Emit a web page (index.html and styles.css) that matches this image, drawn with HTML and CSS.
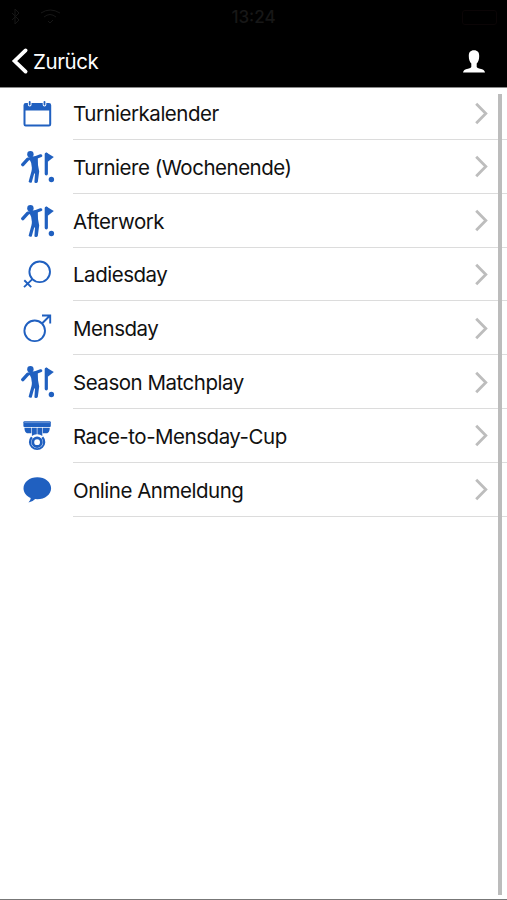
FILE: index.html
```html
<!DOCTYPE html>
<html lang="de">

<head>
    <meta charset="UTF-8">
    <meta name="viewport" content="width=device-width, initial-scale=1.0">
    <title>Turniere</title>
    <link rel="stylesheet" href="styles.css">
</head>

<body>

    <svg class="sprite" width="0" height="0">
        <symbol id="golf" viewBox="0 0 34 32">
            <circle cx="9.4" cy="3.2" r="3.2" />
            <path d="M1.8 13.6 6.8 8.2" fill="none" stroke="currentColor" stroke-width="3.4" stroke-linecap="round" />
            <path d="M8 7.8Q14 7.6 19.8 4.7" fill="none" stroke="currentColor" stroke-width="3" stroke-linecap="round" />
            <path d="M8.2 7.5Q12.5 6.2 16.8 7L17 14 18.2 20.5 16.8 31Q15 33 13.4 31.2L14 22.5 13.2 22.5 10.7 31.4Q9 32.4 7.6 30.7L10.4 20.5Q12 14 8.2 7.5Z" />
            <path d="M25.3 3V22.8" fill="none" stroke="currentColor" stroke-width="3.2" stroke-linecap="round" />
            <path d="M25.3 1.5 32.8 6 26.5 11Z" />
            <circle cx="30.4" cy="28.5" r="2.7" />
        </symbol>
        <symbol id="chevron" viewBox="0 0 14 24">
            <path d="M2.2 1.8 11.8 11.5 2.2 21.2" fill="none" stroke="currentColor" stroke-width="2.8" />
        </symbol>
    </svg>

    <header class="header">
        <div class="status-bar">
            <div class="status-left">
                <svg width="46" height="18" viewBox="0 0 46 18" fill="none" stroke="currentColor">
                    <path d="M2 5 9 12 5 16V1L9 5 2 12" />
                    <path d="M31 5Q40 -1 50 5M34 9Q40 4 46 9M38 13 40 15 43 12" />
                </svg>
            </div>
            <span class="status-time">13:24</span>
            <div class="status-right">
                <div class="battery"></div>
            </div>
        </div>
        <nav class="nav-bar">
            <a class="back" href="#">
                <svg width="17" height="26" viewBox="0 0 17 26">
                    <path d="M14.6 2.4 3.6 13 14.6 23.6" fill="none" stroke="currentColor" stroke-width="3.8" stroke-linecap="round" />
                </svg>
                <span>Zurück</span>
            </a>
            <a class="profile" href="#" aria-label="Profil">
                <svg width="22" height="23" viewBox="0 0 22 23" fill="currentColor">
                    <path d="M11 0.3C14.6 0.3 16.3 2.5 16.2 6 16.2 9.6 15.3 12 13.7 13.4V17Q14 18.2 17 18.8 21.7 19.5 22 22.6H0Q0.3 19.5 5 18.8 8 18.2 8.3 17V13.4C6.7 12 5.8 9.6 5.8 6 5.7 2.5 7.4 0.3 11 0.3Z" />
                </svg>
            </a>
        </nav>
    </header>

    <main class="content">
        <ul class="menu">
            <li class="menu-item">
                <svg class="icon" viewBox="0 0 34 32">
                    <path fill-rule="evenodd" d="M4.7 5H28Q30.2 5 30.2 7.2V26.3Q30.2 28.5 28 28.5H4.7Q2.5 28.5 2.5 26.3V7.2Q2.5 5 4.7 5ZM4.5 12.5V26.5H28.2V12.5Z" />
                    <path d="M8.7 3.5V6.7M23.5 3.5V6.7" stroke="#fff" stroke-width="3.6" stroke-linecap="round" />
                    <path d="M8.7 3.8V6.5M23.5 3.8V6.5" stroke="currentColor" stroke-width="1.8" stroke-linecap="round" />
                </svg>
                <div class="row"><span>Turnierkalender</span><svg class="chevron"><use href="#chevron" /></svg></div>
            </li>
            <li class="menu-item">
                <svg class="icon"><use href="#golf" /></svg>
                <div class="row"><span>Turniere (Wochenende)</span><svg class="chevron"><use href="#chevron" /></svg></div>
            </li>
            <li class="menu-item">
                <svg class="icon"><use href="#golf" /></svg>
                <div class="row"><span>Afterwork</span><svg class="chevron"><use href="#chevron" /></svg></div>
            </li>
            <li class="menu-item">
                <svg class="icon line" viewBox="0 0 34 32">
                    <circle cx="18.7" cy="13.8" r="10.3" />
                    <path d="M11.4 21.1 3 29.1M3.3 22.3 10.2 29.1" />
                </svg>
                <div class="row"><span>Ladiesday</span><svg class="chevron"><use href="#chevron" /></svg></div>
            </li>
            <li class="menu-item">
                <svg class="icon line" viewBox="0 0 34 32">
                    <circle cx="13.7" cy="18.8" r="10.3" />
                    <path d="M21 11.5 29 3.5M21 3.5H29.2V11.6" />
                </svg>
                <div class="row"><span>Mensday</span><svg class="chevron"><use href="#chevron" /></svg></div>
            </li>
            <li class="menu-item">
                <svg class="icon"><use href="#golf" /></svg>
                <div class="row"><span>Season Matchplay</span><svg class="chevron"><use href="#chevron" /></svg></div>
            </li>
            <li class="menu-item">
                <svg class="icon" viewBox="0 0 34 32">
                    <rect x="2.4" y="1.2" width="27.4" height="5.8" rx="1" />
                    <path d="M3.3 2.6H28.9" stroke="#7fa3dc" stroke-width="0.7" />
                    <path d="M3.4 7.7H10.3V13.2H6Q3.6 12.3 3.4 7.7ZM10.9 7.7H15.8V14.2Q13 14.2 10.9 16ZM16.4 7.7H21.3V16Q19.2 14.2 16.4 14.2ZM21.9 7.7H28.8Q28.6 12.3 26.2 13.2H21.9Z" />
                    <path d="M10 16.4A8.2 8.2 0 1 0 22.2 16.4L20.4 18A6 6 0 1 1 11.8 18Z" />
                    <circle cx="16.1" cy="22.2" r="4.3" fill="none" stroke="currentColor" stroke-width="2.8" />
                </svg>
                <div class="row"><span>Race-to-Mensday-Cup</span><svg class="chevron"><use href="#chevron" /></svg></div>
            </li>
            <li class="menu-item">
                <svg class="icon" viewBox="0 0 34 32">
                    <path d="M16.3 3.2C24 3.2 30.1 8 30.1 14.2S24 25.2 16.3 25.2L14.2 25Q11.8 27.8 7.5 28.5 9.7 26.4 9.7 23.9C5.3 22 2.5 18.5 2.5 14.2 2.5 8 8.7 3.2 16.3 3.2Z" />
                </svg>
                <div class="row"><span>Online Anmeldung</span><svg class="chevron"><use href="#chevron" /></svg></div>
            </li>
        </ul>
        <div class="scrollbar"></div>
    </main>

</body>

</html>
```

FILE: styles.css
```css
/* Basic Reset */
* {
    margin: 0;
    padding: 0;
    box-sizing: border-box;
}

body {
    font-family: Inter, 'Liberation Sans', sans-serif;
    background-color: #fff;
    color: #111;
    height: 100vh;
    display: flex;
    flex-direction: column;
    overflow: hidden;
}

svg {
    display: block;
    flex: none;
    overflow: visible;
}

.sprite {
    position: absolute;
}

/* Header */
.header {
    height: 88px;
    background-color: #000;
    border-bottom: 1px solid #8a8a8a;
    color: #fff;
}

.status-bar {
    height: 34px;
    padding: 0 10px;
    display: grid;
    grid-template-columns: 1fr auto 1fr;
    align-items: center;
    color: #171717;
}

.status-time {
    font-size: 17px;
    font-weight: 500;
}

.status-right {
    display: flex;
    justify-content: flex-end;
}

.battery {
    width: 35px;
    height: 15px;
    border: 1px solid #0b0506;
    border-radius: 3px;
}

.nav-bar {
    height: 54px;
    padding: 0 22px 0 11px;
    display: flex;
    align-items: center;
    justify-content: space-between;
}

.nav-bar a {
    color: #fff;
    text-decoration: none;
}

.back {
    display: flex;
    align-items: center;
    gap: 5px;
    font-size: 20.5px;
    letter-spacing: -0.4px;
}

.back span {
    padding-top: 1px;
}

/* Menu */
.content {
    flex: 1;
    position: relative;
    border-bottom: 1px solid #777;
}

.menu {
    list-style: none;
}

.menu-item {
    height: 53.8px;
    padding-left: 21px;
    display: flex;
    align-items: center;
    gap: 18px;
}

.menu-item:first-child {
    height: 52px;
}

.icon {
    width: 34px;
    height: 32px;
    color: #2060c0;
    fill: currentColor;
}

.line {
    fill: none;
    stroke: currentColor;
    stroke-width: 1.9;
}

.row {
    flex: 1;
    height: 100%;
    padding: 2px 19px 0 0;
    display: flex;
    align-items: center;
    justify-content: space-between;
    border-bottom: 1px solid #dcdcdc;
    font-size: 20.5px;
    letter-spacing: -0.48px;
}

.menu-item:first-child .row {
    padding-top: 0;
}

.chevron {
    width: 14px;
    height: 24px;
    color: #bdbdbd;
}

.scrollbar {
    position: absolute;
    top: 6px;
    right: 5px;
    bottom: 4px;
    width: 4px;
    background-color: #bcbcbc;
}
```
